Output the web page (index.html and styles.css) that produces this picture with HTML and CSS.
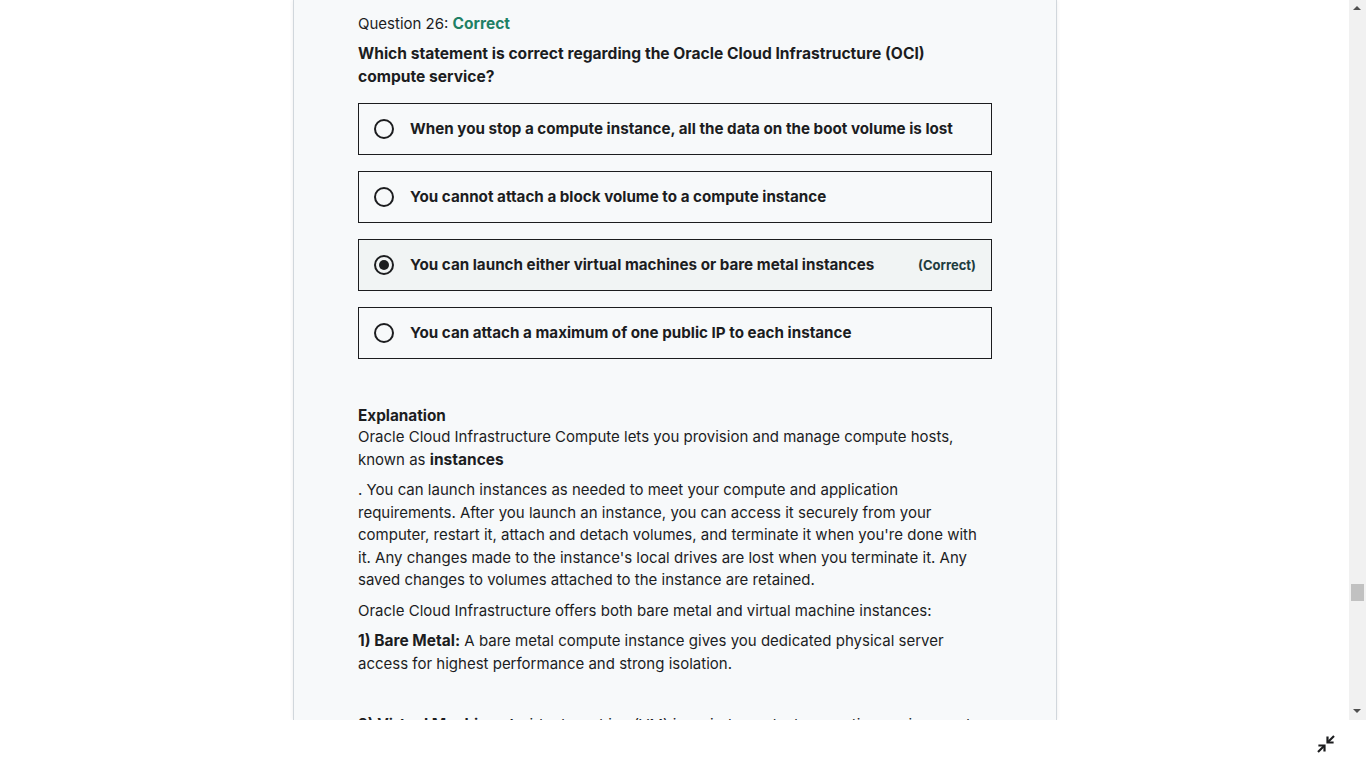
FILE: index.html
```html
<!DOCTYPE html>
<html lang="en">
<head>
<meta charset="utf-8">
<title>Question 26</title>
<link rel="stylesheet" href="styles.css">
</head>
<body>
<div class="viewport">
  <div class="page">
    <div class="panel">
      <div class="q-header">Question 26: <span class="q-status">Correct</span></div>
      <div class="q-prompt">Which statement is correct regarding the Oracle Cloud Infrastructure (OCI) compute service?</div>
      <ul class="answers">
        <li class="answer">
          <span class="radio"></span>
          <span class="answer-text">When you stop a compute instance, all the data on the boot volume is lost</span>
        </li>
        <li class="answer">
          <span class="radio"></span>
          <span class="answer-text">You cannot attach a block volume to a compute instance</span>
        </li>
        <li class="answer answer-selected">
          <span class="radio radio-checked"></span>
          <span class="answer-text">You can launch either virtual machines or bare metal instances</span>
          <span class="answer-tag">(Correct)</span>
        </li>
        <li class="answer">
          <span class="radio"></span>
          <span class="answer-text">You can attach a maximum of one public IP to each instance</span>
        </li>
      </ul>
      <div class="explanation">
        <div class="exp-title">Explanation</div>
        <p class="exp-first">Oracle Cloud Infrastructure Compute lets you provision and manage compute hosts, known as <strong>instances</strong></p>
        <p>. You can launch instances as needed to meet your compute and application requirements. After you launch an instance, you can access it securely from your computer, restart it, attach and detach volumes, and terminate it when you're done with it. Any changes made to the instance's local drives are lost when you terminate it. Any saved changes to volumes attached to the instance are retained.</p>
        <p>Oracle Cloud Infrastructure offers both bare metal and virtual machine instances:</p>
        <p><strong>1) Bare Metal:</strong> A bare metal compute instance gives you dedicated physical server access for highest performance and strong isolation.</p>
        <p class="empty">&nbsp;</p>
        <p><strong>2) Virtual Machine:</strong> A virtual machine (VM) is an independent computing environment that runs on top of physical bare metal hardware.</p>
      </div>
    </div>
  </div>
  <div class="scrollbar">
    <div class="sb-arrow sb-up"></div>
    <div class="sb-track"><div class="sb-thumb"></div></div>
    <div class="sb-arrow sb-down"></div>
  </div>
</div>
<div class="footer">
  <button class="exit-btn" aria-label="Exit fullscreen">
    <svg width="20" height="20" viewBox="0 0 20 20" fill="none" stroke="#1c1d1f" stroke-width="2.2">
      <path d="M18 2 L12 8"/>
      <path d="M11.5 3.5 V8.5 H16.5" stroke-linecap="square"/>
      <path d="M2 18 L8 12"/>
      <path d="M3.5 11.5 H8.5 V16.5" stroke-linecap="square"/>
    </svg>
  </button>
</div>
</body>
</html>
```
FILE: styles.css
```css
* { box-sizing: border-box; }
html, body { margin: 0; padding: 0; }
body {
  background: #ffffff;
  font-family: "Inter", "Noto Sans", sans-serif;
  color: #1c1d1f;
  font-size: 15px;
  line-height: 1.4;
  width: 1366px;
  height: 768px;
  overflow: hidden;
}
.viewport {
  display: flex;
  height: 720px;
}
.page {
  flex: 1;
  display: flex;
  justify-content: center;
  overflow: hidden;
  padding-left: 1px;
}
.panel {
  width: 764px;
  background: #f7f9fa;
  border-left: 1px solid #d1d7dc;
  border-right: 1px solid #d1d7dc;
  box-shadow: 0 0 4px rgba(0,0,0,0.08);
  padding: 13px 64px 0 64px;
}
.q-header {
  font-size: 15px;
  line-height: 22px;
}
.q-status {
  color: #1e8065;
  font-weight: 700;
  font-size: 15.5px;
}
.q-prompt {
  margin-top: 7px;
  font-weight: 700;
  font-size: 15.6px;
  line-height: 23px;
}
.answers {
  list-style: none;
  margin: 15px 0 0 0;
  padding: 0;
  display: flex;
  flex-direction: column;
  gap: 16px;
}
.answer {
  height: 52px;
  border: 1px solid #1c1d1f;
  display: flex;
  align-items: center;
  padding: 0 15px;
  font-weight: 700;
  font-size: 15.2px;
}
.answer-selected { background: #f1f4f4; }
.radio {
  width: 20px;
  height: 20px;
  border: 2px solid #1c1d1f;
  border-radius: 50%;
  flex: none;
  margin-right: 16px;
  display: flex;
  align-items: center;
  justify-content: center;
}
.radio-checked::after {
  content: "";
  width: 10px;
  height: 10px;
  border-radius: 50%;
  background: #1c1d1f;
}
.answer-text { flex: 1; }
.answer-tag {
  font-size: 13px;
  color: #1e3c3f;
}
.explanation {
  margin-top: 46px;
}
.exp-title {
  font-weight: 700;
  font-size: 15.3px;
  line-height: 22px;
}
.explanation p {
  margin: 0 0 8px 0;
  line-height: 22.5px;
}
.explanation strong {
  font-size: 15.5px;
}
.explanation p.exp-first { margin-top: -1px; }
.footer {
  height: 48px;
  display: flex;
  justify-content: flex-end;
  align-items: center;
  padding-right: 30px;
}
.exit-btn {
  border: 0;
  background: transparent;
  padding: 0;
  width: 20px;
  height: 20px;
  display: block;
}
.scrollbar {
  width: 17px;
  background: #f1f1f1;
  display: flex;
  flex-direction: column;
}
.sb-arrow {
  height: 17px;
  position: relative;
}
.sb-up::after, .sb-down::after {
  content: "";
  position: absolute;
  left: 4px;
  top: 6px;
  border-left: 4px solid transparent;
  border-right: 4px solid transparent;
}
.sb-up::after { border-bottom: 4px solid #505050; }
.sb-down::after { border-top: 4px solid #505050; }
.sb-track {
  flex: 1;
  padding: 567px 2px 0 2px;
}
.sb-thumb {
  height: 17px;
  background: #c1c1c1;
}
```
